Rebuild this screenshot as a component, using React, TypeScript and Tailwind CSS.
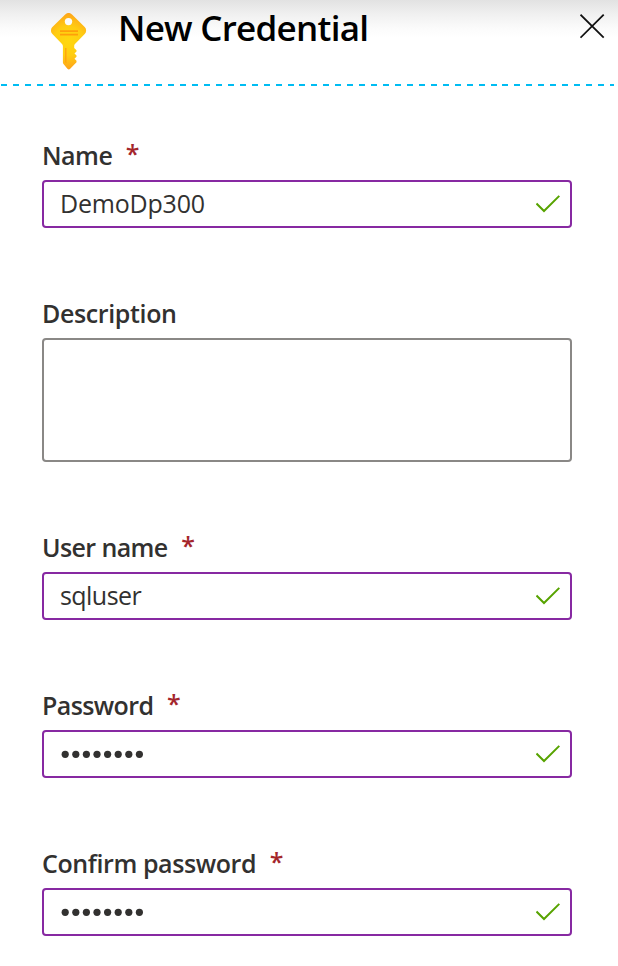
import React from "react";

type FieldProps = {
  label: string;
  labelTracking: string;
  required?: boolean;
  children: React.ReactNode;
};

function Field({ label, labelTracking, required, children }: FieldProps) {
  return (
    <div>
      <div className="flex h-12 items-center gap-[13.5px] pb-0.5 whitespace-pre text-[25px] leading-[46px] font-semibold text-[#323130]">
        <span className={labelTracking}>{label}</span>
        {required && <span className="pb-1 text-[25px] leading-[42px] font-semibold text-[#a4262c]">*</span>}
      </div>
      {children}
    </div>
  );
}

function ValidBox({ children }: { children: React.ReactNode }) {
  return (
    <div className="flex h-12 items-center justify-between rounded-[4px] border-2 border-[#8729a2] pr-[10px] pl-4 text-[25px] text-[#323130]">
      {children}
      <svg width="24" height="20" viewBox="0 0 24 20" fill="none" stroke="#57a300" strokeWidth="2">
        <path d="M.5 9.5 8 17 23.3 1.9" />
      </svg>
    </div>
  );
}

function Dots() {
  return (
    <svg width="86" height="10" viewBox="0 0 86 10" fill="#323130">
      {Array.from({ length: 8 }, (_, i) => (
        <circle key={i} cx={5.2 + i * 10.6} cy="5.3" r="3.6" />
      ))}
    </svg>
  );
}

function KeyIcon() {
  return (
    <svg width="36" height="57" viewBox="0 0 36 57">
      <defs>
        <radialGradient id="key" gradientUnits="userSpaceOnUse" cx="17.5" cy="28" r="29">
          <stop offset="0" stopColor="#ffd70f" />
          <stop offset=".5" stopColor="#ffcd12" />
          <stop offset="1" stopColor="#fea11b" />
        </radialGradient>
      </defs>
      <path
        fill="url(#key)"
        d="M14.2 1.5a5 5 0 0 1 6.8 0L33.7 14a5 5 0 0 1 0 7L24 31a2.5 2.5 0 0 0-.8 1.8V35l2.3 2.2v1.2L23.5 40.5l2 2v1.2l-2 2 2 2v1.6l-6.3 6.4a2 2 0 0 1-2.8 0L12.5 51a2 2 0 0 1-.6-1.4V33a3 3 0 0 0-.9-2L1.4 21.1a5 5 0 0 1 0-7Z"
      />
      <circle cx="17.5" cy="8.6" r="3.7" fill="#fbfbfb" />
      <path fill="#ff9f0a" d="M9 17.2h18v1.8H9zM9 20.7h18v1.8H9zM14.2 35h1.2v15.2l-1.2-.9z" />
    </svg>
  );
}

export default function App() {
  return (
    <div className="h-[966px] w-full overflow-hidden bg-white font-['Open_Sans','Noto_Sans',sans-serif]">
      <header className="flex h-[84px] items-start bg-[linear-gradient(to_bottom,#e2e2e2_0px,#f0f0f0_14px,#fbfbfb_28px,#ffffff_38px)] pl-[51px]">
        <div className="pt-[13px]">
          <KeyIcon />
        </div>
        <h1 className="pl-[31px] text-[35px] leading-[56px] font-semibold tracking-[-0.73px] whitespace-nowrap text-black">
          New Credential
        </h1>
        <svg className="mt-[14px] mr-[13px] ml-auto" width="25" height="25" viewBox="0 0 25 25" stroke="#111" strokeWidth="1.8">
          <path d="M.5 .7 23.7 23.7M23.7 .7 .5 23.7" />
        </svg>
      </header>
      <div className="h-0.5 w-[614px] bg-[repeating-linear-gradient(to_right,transparent_0px,transparent_1px,#00bcf2_1px,#00bcf2_7px,transparent_7px,transparent_11.94px)]" />
      <main className="flex w-[572px] flex-col gap-[62px] pt-[46px] pl-[42px]">
        <Field label="Name" labelTracking="tracking-[-0.5px]" required>
          <ValidBox>
            <span className="tracking-[-0.2px]">DemoDp300</span>
          </ValidBox>
        </Field>
        <Field label="Description" labelTracking="tracking-[-0.37px]">
          <div className="h-[124px] rounded-[4px] border-2 border-[#8a8886]" />
        </Field>
        <Field label="User name" labelTracking="tracking-[-0.6px]" required>
          <ValidBox>
            <span className="tracking-[-0.55px]">sqluser</span>
          </ValidBox>
        </Field>
        <Field label="Password" labelTracking="tracking-[-0.6px]" required>
          <ValidBox>
            <Dots />
          </ValidBox>
        </Field>
        <Field label="Confirm password" labelTracking="tracking-[-0.4px]" required>
          <ValidBox>
            <Dots />
          </ValidBox>
        </Field>
      </main>
    </div>
  );
}
